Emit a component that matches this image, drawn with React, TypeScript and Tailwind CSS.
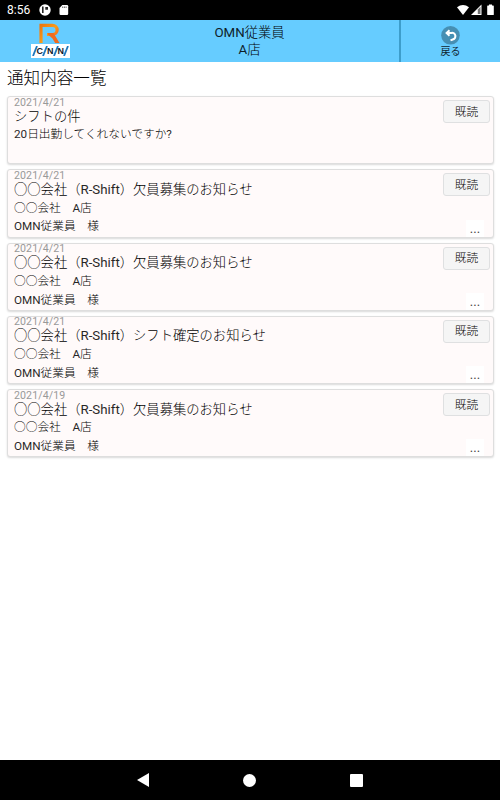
type Notice = { date: string; title: string; lines: string[]; more: boolean };

const VACANCY = '○○会社（R-Shift）欠員募集のお知らせ';
const BODY = ['○○会社　A店', 'OMN従業員　様'];

const notices: Notice[] = [
  { date: '2021/4/21', title: 'シフトの件', lines: ['20日出勤してくれないですか?'], more: false },
  { date: '2021/4/21', title: VACANCY, lines: BODY, more: true },
  { date: '2021/4/21', title: VACANCY, lines: BODY, more: true },
  { date: '2021/4/21', title: '○○会社（R-Shift）シフト確定のお知らせ', lines: BODY, more: true },
  { date: '2021/4/19', title: VACANCY, lines: BODY, more: true },
];

// Latin runs take the regular weight, Japanese runs keep the inherited light one.
function Mixed({ text }: { text: string }) {
  return (
    <>
      {text.split(/([\x21-\x7e]+)/).map((run, index) =>
        index % 2 ? (
          <span key={index} className="font-normal opacity-85">
            {run}
          </span>
        ) : (
          run
        ),
      )}
    </>
  );
}

function StatusBar() {
  return (
    <div className="flex h-5 shrink-0 items-center bg-black pl-[7px] pr-[6px] font-normal text-white">
      <span className="w-8 text-[12px] leading-[21px]">8:56</span>
      <svg className="h-3 w-3" viewBox="0 0 12 12">
        <circle cx="6" cy="6" r="5.7" fill="#fff" />
        <path d="M3 2.600h1.600v6.400H3zM6.300 3H9v2.800H6.300z" fill="#000" opacity=".85" />
      </svg>
      <svg className="ml-2 h-3 w-[10px]" viewBox="0 0 10 12">
        <path d="M3.3 1H8q1.2 0 1.2 1.2v7.6Q9.200 11 8 11H1.700Q.5 11 .5 9.800V4z" fill="#fff" />
        <path d="M3.700 2.500v1.500M5.400 2.500v1.500M7.100 2.500v1.500" stroke="#000" strokeWidth=".6" />
      </svg>
      <svg className="ml-auto h-3 w-[37px]" viewBox="0 0 37 12">
        <path d="M0 3.200Q6 -1.300 12 3.200L6 11z" fill="#fff" />
        <path d="M24.500 .5V11H14z" fill="#fff" />
        <path d="M20.800 5.400 23.500 2.700v7.300h-2.700z" fill="#000" opacity=".55" />
        <path d="M32 .5h3v1h1.200q.6 0 .6.600v8.300q0 .600-.600.600h-5.400q-.600 0-.600-.600V2.100q0-.600.600-.600H32z" fill="#fff" />
      </svg>
    </div>
  );
}

function Slash() {
  return (
    <svg className="-mx-px h-[10px] w-[6px] shrink-0" viewBox="0 0 6 10">
      <path d="M1 10 5 0" stroke="#1e78bd" strokeWidth="1.800" />
    </svg>
  );
}

function Logo() {
  return (
    <div className="flex w-[39px] flex-col items-center pt-[3px]">
      <svg className="h-[21px] w-[22px]" viewBox="0 0 22 21">
        <defs>
          <linearGradient id="orange" x1="0" y1="0" x2="1" y2="1">
            <stop offset="0" stopColor="#ed7810" />
            <stop offset=".5" stopColor="#f99b19" />
            <stop offset="1" stopColor="#f04b22" />
          </linearGradient>
        </defs>
        <path
          d="M2 20V2.300H13.500a4.600 4.600 0 0 1 0 9.200H8"
          fill="none"
          stroke="url(#orange)"
          strokeWidth="3.200"
        />
        <path d="M9 10h5.500l6 10h-4.300l-2.700-4.500-4.500-3.900z" fill="#ef6b1e" />
      </svg>
      <div className="flex h-[14px] w-[39px] shrink-0 items-center justify-between bg-white px-[2px] font-['Liberation_Sans'] text-[9px] font-bold leading-[14px] text-[#111827]">
        <Slash />
        <span>C</span>
        <Slash />
        <span>N</span>
        <Slash />
        <span>N</span>
        <Slash />
      </div>
    </div>
  );
}

function Header() {
  return (
    <header className="flex h-[42px] shrink-0 bg-[#66ccff] text-black">
      <div className="flex w-[100px] justify-center">
        <Logo />
      </div>
      <div className="flex-1 border-r-2 border-[#3d9dcb] pt-[4px] text-center text-[13.300px] leading-[17px]">
        <div>
          <Mixed text="OMN従業員" />
        </div>
        <div>
          <Mixed text="A店" />
        </div>
      </div>
      <button className="flex w-[99px] flex-col items-center pt-[6px]">
        <svg className="h-[19px] w-[19px] shrink-0" viewBox="0 0 19 19">
          <circle cx="9.500" cy="9.300" r="9.300" fill="#468fb3" />
          <path d="M8.500 4.200 5.600 6.900l2.900 2.800M6 6.900h4.400a3.300 3.300 0 0 1 1.300 6.600l-2.200.9" fill="none" stroke="#fff" strokeWidth="2" />
        </svg>
        <span className="text-[10px] font-normal leading-[14px] text-[#102530]">戻る</span>
      </button>
    </header>
  );
}

function NoticeCard({ notice }: { notice: Notice }) {
  return (
    <li className="flex h-[68.250px] justify-between rounded-[3px] border border-[#dedede] bg-[#fffafa] pl-[6px] shadow-[0_1px_2px_rgba(0,0,0,0.15)]">
      <div className="whitespace-nowrap pt-[0.500px] text-[11.700px] leading-[18.700px] text-black">
        <div className="h-[10px] text-[10.600px] font-normal leading-[10px] tracking-[0.100px] text-[#999]">{notice.date}</div>
        <div className="h-[17.900px] text-[13.300px] leading-[17.500px]">
          <Mixed text={notice.title} />
        </div>
        {notice.lines.map((line) => (
          <div key={line}>
            <Mixed text={line} />
          </div>
        ))}
      </div>
      <div className="flex flex-col items-end justify-between pr-[3px] pt-[3px]">
        <button className="h-[23px] w-[47px] rounded-[3px] border border-[#dfe0e1] bg-[#f5f5f5] text-[11.700px] leading-[20px] text-black">
          既読
        </button>
        {notice.more && (
          <span className="mr-[6px] h-[17px] w-[18px] bg-white text-center text-[13px] font-normal leading-[18px] text-[#444]">...</span>
        )}
      </div>
    </li>
  );
}

function NavigationBar() {
  return (
    <nav className="flex h-10 shrink-0 items-center justify-between bg-black pl-[137px] pr-[137px]">
      <svg className="h-[14px] w-[13px]" viewBox="0 0 13 14">
        <path d="M12 0v14L0 7z" fill="#fff" />
      </svg>
      <span className="-ml-px h-[13px] w-[13px] rounded-full bg-white" />
      <span className="h-[13px] w-[13px] rounded-[1px] bg-white" />
    </nav>
  );
}

export default function App() {
  return (
    <div className="flex h-[800px] w-[500px] flex-col overflow-hidden bg-white font-[Roboto,'Noto_Sans_CJK_JP',sans-serif] font-light" lang="ja">
      <StatusBar />
      <Header />
      <main className="flex-1 pl-[7px] pr-[6px]">
        <h1 className="h-[34px] text-[16.600px] leading-[33px] text-black">通知内容一覧</h1>
        <ul className="flex flex-col gap-[5px]">
          {notices.map((notice, index) => (
            <NoticeCard key={index} notice={notice} />
          ))}
        </ul>
      </main>
      <NavigationBar />
    </div>
  );
}
